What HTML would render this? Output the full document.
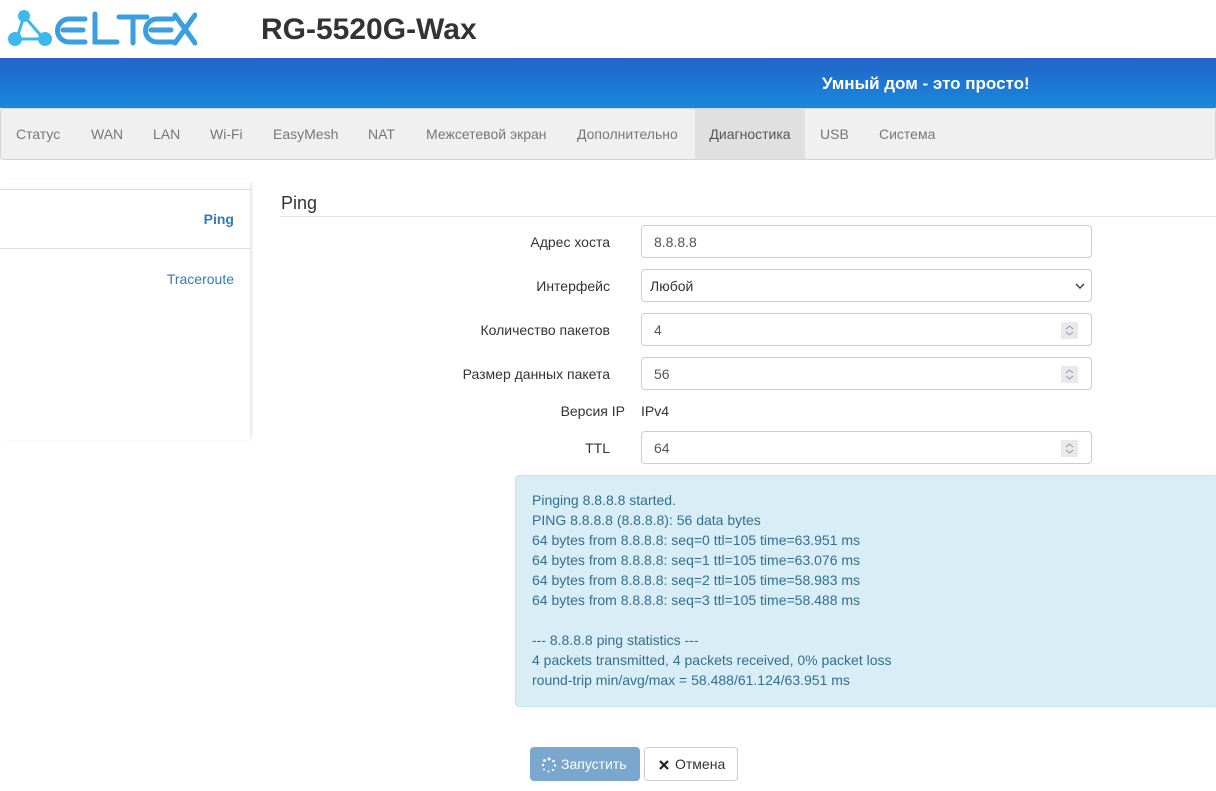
<!DOCTYPE html>
<html><head><meta charset="utf-8"><style>
*{box-sizing:border-box}
body{margin:0;width:1216px;height:791px;overflow:hidden;font-family:"Liberation Sans",sans-serif;font-size:14px;color:#333;background:#fff;position:relative}
.abs{position:absolute}
.blue{top:58px;left:0;width:1216px;height:50px;background:linear-gradient(#2463c9,#1889dc)}
.nav{top:108px;left:0;width:1216px;height:52px;background:#f0f0f0;border:1px solid #d5d5d5;border-radius:3px}
.nav span{position:absolute;top:0;line-height:51px;color:#777;font-size:14px}
.lbl{right:606px;text-align:right;font-size:14px;color:#333}
.inp{left:641px;width:451px;height:33px;border:1px solid #ccc;border-radius:4px;padding-left:12px;line-height:33px;font-size:14px;color:#555}
.spin{position:absolute;right:13px;top:8px;width:17px;height:17px;background:#e8e8ee;line-height:0}
.spin svg{display:block}
.alert{left:515px;top:475px;width:702px;height:232px;background:#d9edf7;border:1px solid #bce8f1;border-radius:4px;color:#31708f;padding:14px 16px;line-height:20px;font-size:14px}
</style></head><body>
<svg class="abs" style="left:7px;top:8px" width="190" height="40" viewBox="0 0 190 40">
<g fill="#3db8ea"><circle cx="17" cy="8" r="6"/><circle cx="8" cy="31" r="7"/><circle cx="38" cy="31" r="7"/></g>
<g stroke="#3db8ea" stroke-width="3" fill="none"><line x1="17" y1="8" x2="10" y2="30"/><line x1="17" y1="8" x2="36" y2="30"/><line x1="8" y1="31" x2="38" y2="31"/></g>
<g stroke="#3a9ee0" stroke-width="5" fill="none" stroke-linecap="round">
<path d="M78 11H62a10 10 0 0 0 0 23H78M56 22H76"/>
<path d="M88 6V34H110"/>
<path d="M112 9H140M126 9V35"/>
<path d="M166 11H150a10 10 0 0 0 0 23H166M144 22H164"/>
<path d="M168 7L188 35M188 7L168 35"/></g></svg>
<div class="abs" style="left:261px;top:13px;font-size:30px;font-weight:bold;color:#333">RG-5520G-Wax</div>
<div class="abs blue"></div>
<div class="abs" style="left:822px;top:74px;color:#fff;font-weight:bold;font-size:17px">Умный дом - это просто!</div>
<div class="abs nav">
<span style="left:15px">Статус</span><span style="left:90px">WAN</span><span style="left:152px">LAN</span><span style="left:209px">Wi-Fi</span><span style="left:272px">EasyMesh</span><span style="left:367px">NAT</span><span style="left:425px">Межсетевой экран</span><span style="left:576px">Дополнительно</span>
<span style="left:694px;width:110px;top:0;height:50px;background:#e0e0e0;color:#555;text-align:center">Диагностика</span>
<span style="left:819px">USB</span><span style="left:878px">Система</span></div>
<div class="abs" style="left:0;top:180px;width:250px;height:260px;box-shadow:3px 0 4px -2px rgba(0,0,0,.15)"></div>
<div class="abs" style="left:0;top:189px;width:250px;border-top:1px solid #ddd"></div>
<div class="abs" style="left:0;top:248px;width:250px;border-top:1px solid #ddd"></div>
<div class="abs" style="right:982px;top:211px;color:#337ab7;font-weight:bold">Ping</div>
<div class="abs" style="right:982px;top:271px;color:#337ab7">Traceroute</div>
<div class="abs" style="left:281px;top:193px;font-size:18px;color:#333">Ping</div>
<div class="abs" style="left:280px;top:216px;width:936px;border-top:1px solid #e5e5e5"></div>
<div class="abs lbl" style="top:234px">Адрес хоста</div>
<div class="abs inp" style="top:225px">8.8.8.8</div>
<div class="abs lbl" style="top:278px">Интерфейс</div>
<div class="abs inp" style="top:269px;padding-left:8px;color:#333">Любой<svg style="position:absolute;right:6px;top:13px" width="10" height="7"><path d="M1 1l4 4 4-4" stroke="#444" stroke-width="1.5" fill="none"/></svg></div>
<div class="abs lbl" style="top:322px">Количество пакетов</div>
<div class="abs inp" style="top:313px">4<span class="spin"><svg width="17" height="17"><path d="M5 7l3.5-3 3.5 3M5 10l3.5 3 3.5-3" stroke="#999" stroke-width="1" fill="none"/></svg></span></div>
<div class="abs lbl" style="top:366px">Размер данных пакета</div>
<div class="abs inp" style="top:357px">56<span class="spin"><svg width="17" height="17"><path d="M5 7l3.5-3 3.5 3M5 10l3.5 3 3.5-3" stroke="#999" stroke-width="1" fill="none"/></svg></span></div>
<div class="abs lbl" style="top:403px;right:591px">Версия IP</div>
<div class="abs" style="left:641px;top:403px">IPv4</div>
<div class="abs lbl" style="top:440px">TTL</div>
<div class="abs inp" style="top:431px">64<span class="spin"><svg width="17" height="17"><path d="M5 7l3.5-3 3.5 3M5 10l3.5 3 3.5-3" stroke="#999" stroke-width="1" fill="none"/></svg></span></div>
<div class="abs alert">Pinging 8.8.8.8 started.<br>PING 8.8.8.8 (8.8.8.8): 56 data bytes<br>64 bytes from 8.8.8.8: seq=0 ttl=105 time=63.951 ms<br>64 bytes from 8.8.8.8: seq=1 ttl=105 time=63.076 ms<br>64 bytes from 8.8.8.8: seq=2 ttl=105 time=58.983 ms<br>64 bytes from 8.8.8.8: seq=3 ttl=105 time=58.488 ms<br><br>--- 8.8.8.8 ping statistics ---<br>4 packets transmitted, 4 packets received, 0% packet loss<br>round-trip min/avg/max = 58.488/61.124/63.951 ms</div>
<div class="abs" style="left:530px;top:747px;width:110px;height:34px;background:#7aa7cd;border-radius:4px;color:#fff;line-height:34px;padding-left:31px">Запустить
<svg style="position:absolute;left:11px;top:10px" width="16" height="16"><g fill="#fff"><circle cx="8" cy="2" r="1.5"/><circle cx="12.5" cy="4" r="1.3"/><circle cx="14" cy="8.5" r="1.2"/><circle cx="12" cy="13" r="1.1"/><circle cx="7.5" cy="14.5" r="1"/><circle cx="3" cy="12.5" r="1"/><circle cx="2" cy="8" r="1.2"/><circle cx="3.5" cy="3.5" r="1.4"/></g></svg></div>
<div class="abs" style="left:644px;top:747px;width:94px;height:34px;border:1px solid #ccc;border-radius:4px;line-height:32px;padding-left:30px;color:#333">Отмена
<svg style="position:absolute;left:14px;top:12px" width="10" height="10"><path d="M1 1l8 8M9 1l-8 8" stroke="#222" stroke-width="2.2"/></svg></div>
</body></html>
